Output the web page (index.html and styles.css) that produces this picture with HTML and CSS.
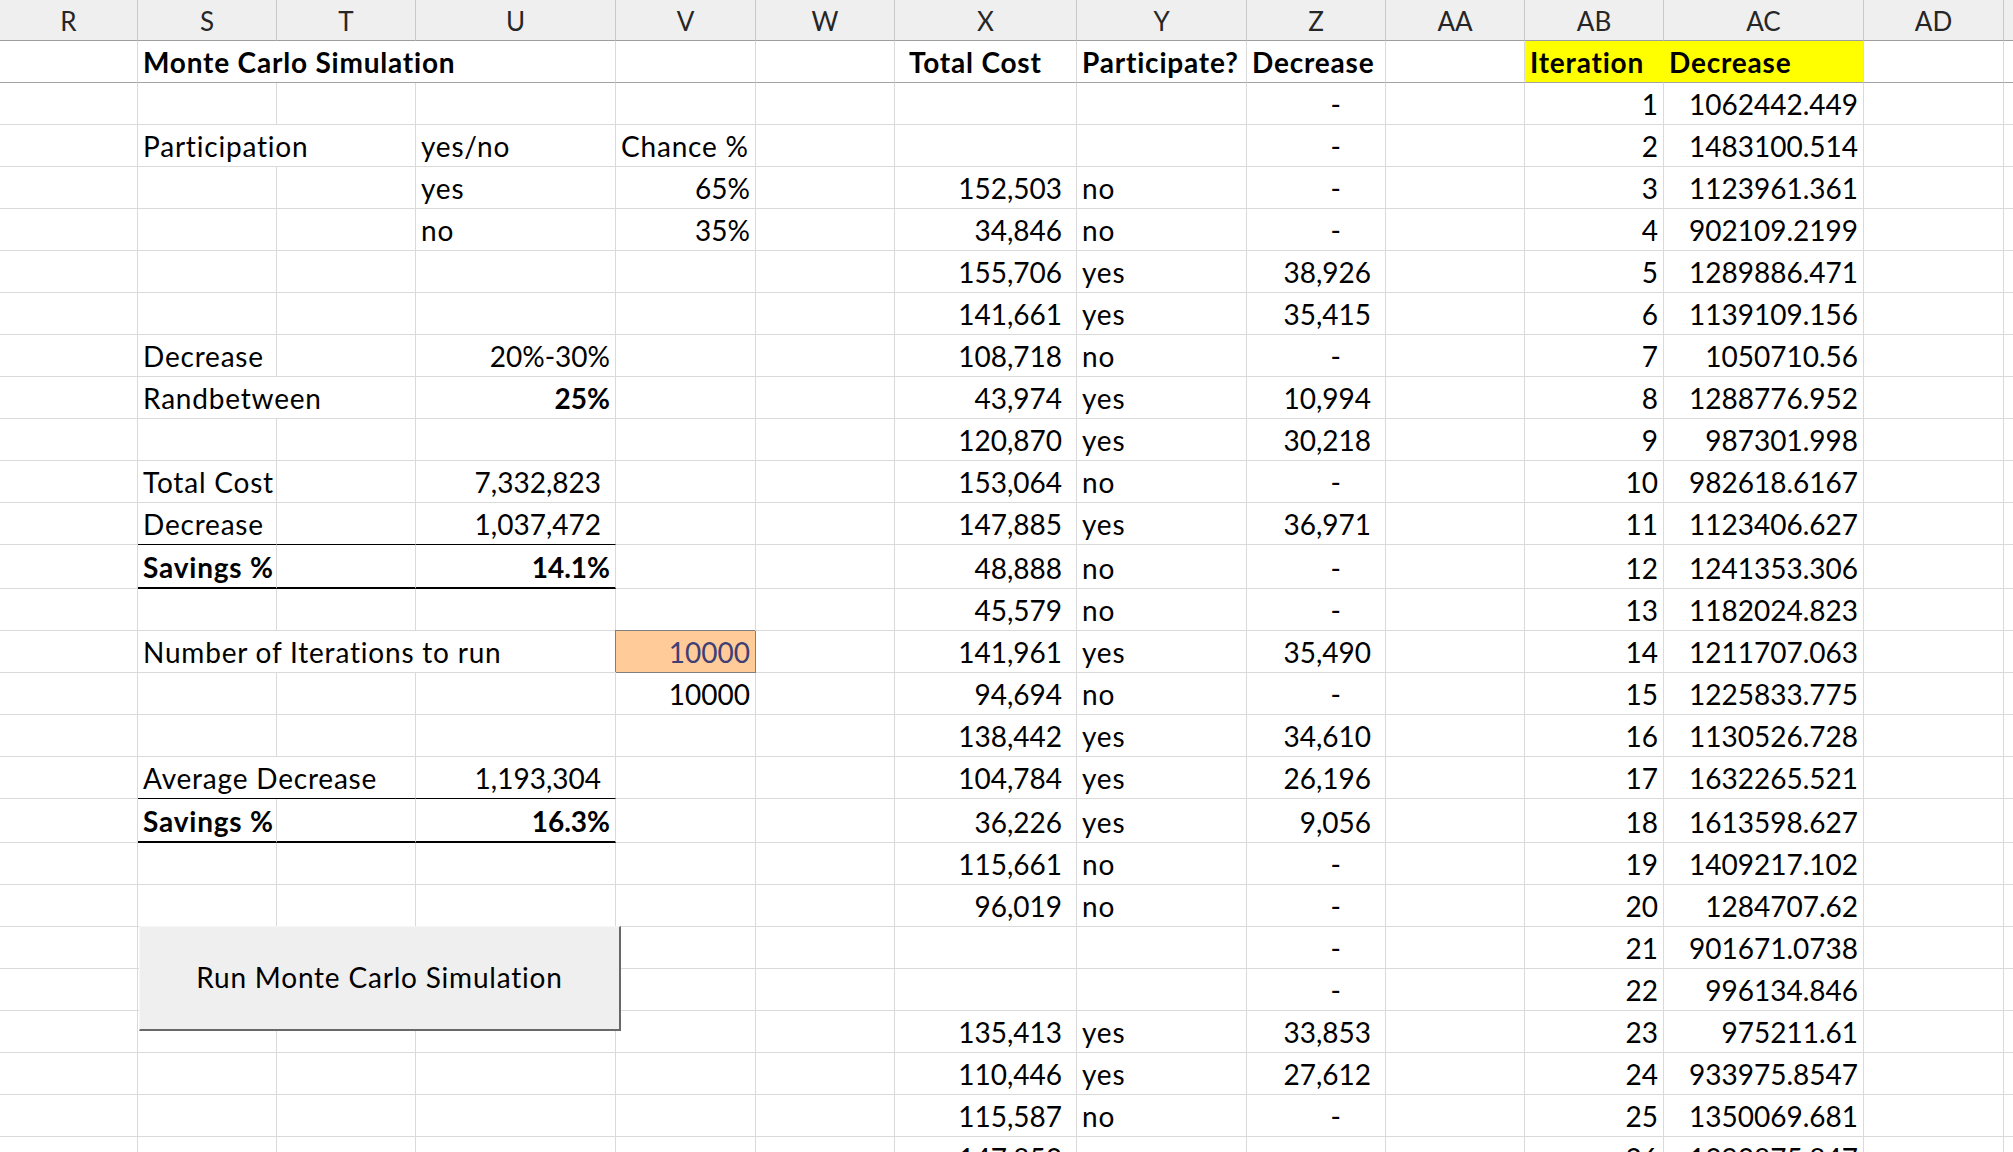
FILE: index.html
```html
<!DOCTYPE html>
<html>
<head>
<meta charset="utf-8">
<title>Monte Carlo Simulation</title>
<link rel="stylesheet" href="styles.css">
</head>
<body>
<div class="sheet">
  <div class="h">R</div><div class="h">S</div><div class="h">T</div><div class="h">U</div><div class="h">V</div><div class="h">W</div><div class="h">X</div><div class="h">Y</div><div class="h">Z</div><div class="h">AA</div><div class="h">AB</div><div class="h">AC</div><div class="h">AD</div><div class="h"></div>

  <div class="t"></div><div class="t b s3">Monte Carlo Simulation</div><div class="t"></div><div class="t"></div><div class="t b pl">Total Cost</div><div class="t b">Participate?</div><div class="t b">Decrease</div><div class="t"></div><div class="t b yel nb">Iteration</div><div class="t b yel">Decrease</div><div class="t"></div><div class="t"></div>

  <div></div><div></div><div></div><div></div><div></div><div></div><div></div><div></div><div class="d">-</div><div></div><div class="r">1</div><div class="r">1062442.449</div><div></div><div></div>

  <div></div><div class="s2">Participation</div><div>yes/no</div><div>Chance %</div><div></div><div></div><div></div><div class="d">-</div><div></div><div class="r">2</div><div class="r">1483100.514</div><div></div><div></div>

  <div></div><div></div><div></div><div>yes</div><div class="r">65%</div><div></div><div class="a">152,503</div><div>no</div><div class="d">-</div><div></div><div class="r">3</div><div class="r">1123961.361</div><div></div><div></div>

  <div></div><div></div><div></div><div>no</div><div class="r">35%</div><div></div><div class="a">34,846</div><div>no</div><div class="d">-</div><div></div><div class="r">4</div><div class="r">902109.2199</div><div></div><div></div>

  <div></div><div></div><div></div><div></div><div></div><div></div><div class="a">155,706</div><div>yes</div><div class="a">38,926</div><div></div><div class="r">5</div><div class="r">1289886.471</div><div></div><div></div>

  <div></div><div></div><div></div><div></div><div></div><div></div><div class="a">141,661</div><div>yes</div><div class="a">35,415</div><div></div><div class="r">6</div><div class="r">1139109.156</div><div></div><div></div>

  <div></div><div>Decrease</div><div></div><div class="r">20%-30%</div><div></div><div></div><div class="a">108,718</div><div>no</div><div class="d">-</div><div></div><div class="r">7</div><div class="r">1050710.56</div><div></div><div></div>

  <div></div><div class="s2">Randbetween</div><div class="r b">25%</div><div></div><div></div><div class="a">43,974</div><div>yes</div><div class="a">10,994</div><div></div><div class="r">8</div><div class="r">1288776.952</div><div></div><div></div>

  <div></div><div></div><div></div><div></div><div></div><div></div><div class="a">120,870</div><div>yes</div><div class="a">30,218</div><div></div><div class="r">9</div><div class="r">987301.998</div><div></div><div></div>

  <div></div><div>Total Cost</div><div></div><div class="a">7,332,823</div><div></div><div></div><div class="a">153,064</div><div>no</div><div class="d">-</div><div></div><div class="r">10</div><div class="r">982618.6167</div><div></div><div></div>

  <div></div><div class="u1">Decrease</div><div class="u1"></div><div class="a u1">1,037,472</div><div></div><div></div><div class="a">147,885</div><div>yes</div><div class="a">36,971</div><div></div><div class="r">11</div><div class="r">1123406.627</div><div></div><div></div>

  <div></div><div class="b u2">Savings %</div><div class="u2"></div><div class="r b u2">14.1%</div><div></div><div></div><div class="a">48,888</div><div>no</div><div class="d">-</div><div></div><div class="r">12</div><div class="r">1241353.306</div><div></div><div></div>

  <div></div><div></div><div></div><div></div><div></div><div></div><div class="a">45,579</div><div>no</div><div class="d">-</div><div></div><div class="r">13</div><div class="r">1182024.823</div><div></div><div></div>

  <div></div><div class="s3">Number of Iterations to run</div><div class="r input">10000</div><div></div><div class="a">141,961</div><div>yes</div><div class="a">35,490</div><div></div><div class="r">14</div><div class="r">1211707.063</div><div></div><div></div>

  <div></div><div></div><div></div><div></div><div class="r">10000</div><div></div><div class="a">94,694</div><div>no</div><div class="d">-</div><div></div><div class="r">15</div><div class="r">1225833.775</div><div></div><div></div>

  <div></div><div></div><div></div><div></div><div></div><div></div><div class="a">138,442</div><div>yes</div><div class="a">34,610</div><div></div><div class="r">16</div><div class="r">1130526.728</div><div></div><div></div>

  <div></div><div class="s2 u1">Average Decrease</div><div class="a u1">1,193,304</div><div></div><div></div><div class="a">104,784</div><div>yes</div><div class="a">26,196</div><div></div><div class="r">17</div><div class="r">1632265.521</div><div></div><div></div>

  <div></div><div class="b u2">Savings %</div><div class="u2"></div><div class="r b u2">16.3%</div><div></div><div></div><div class="a">36,226</div><div>yes</div><div class="a">9,056</div><div></div><div class="r">18</div><div class="r">1613598.627</div><div></div><div></div>

  <div></div><div></div><div></div><div></div><div></div><div></div><div class="a">115,661</div><div>no</div><div class="d">-</div><div></div><div class="r">19</div><div class="r">1409217.102</div><div></div><div></div>

  <div></div><div></div><div></div><div></div><div></div><div></div><div class="a">96,019</div><div>no</div><div class="d">-</div><div></div><div class="r">20</div><div class="r">1284707.62</div><div></div><div></div>

  <div></div><div></div><div></div><div></div><div></div><div></div><div></div><div></div><div class="d">-</div><div></div><div class="r">21</div><div class="r">901671.0738</div><div></div><div></div>

  <div></div><div></div><div></div><div></div><div></div><div></div><div></div><div></div><div class="d">-</div><div></div><div class="r">22</div><div class="r">996134.846</div><div></div><div></div>

  <div></div><div></div><div></div><div></div><div></div><div></div><div class="a">135,413</div><div>yes</div><div class="a">33,853</div><div></div><div class="r">23</div><div class="r">975211.61</div><div></div><div></div>

  <div></div><div></div><div></div><div></div><div></div><div></div><div class="a">110,446</div><div>yes</div><div class="a">27,612</div><div></div><div class="r">24</div><div class="r">933975.8547</div><div></div><div></div>

  <div></div><div></div><div></div><div></div><div></div><div></div><div class="a">115,587</div><div>no</div><div class="d">-</div><div></div><div class="r">25</div><div class="r">1350069.681</div><div></div><div></div>

  <div></div><div></div><div></div><div></div><div></div><div></div><div class="a">147,853</div><div>no</div><div class="d">-</div><div></div><div class="r">26</div><div class="r">1393875.847</div><div></div><div></div>

  <button class="run" type="button">Run Monte Carlo Simulation</button>
</div>
</body>
</html>
```

FILE: styles.css
```css
* { box-sizing: border-box; }
html, body { margin: 0; padding: 0; background: #fff; }
body {
  width: 2013px;
  height: 1152px;
  overflow: hidden;
  font-family: Lato, "Liberation Sans", sans-serif;
  font-size: 28px;
  color: #000;
}
.sheet {
  position: relative;
  display: grid;
  grid-template-columns: 138px 139px 139px 200px 140px 139px 182px 170px 139px 139px 139px 200px 140px 1fr;
  grid-template-rows: 41px repeat(12, 42px) 44px repeat(5, 42px) 44px repeat(8, 42px);
}
.sheet > div {
  border-right: 1px solid #dadada;
  border-bottom: 1px solid #dadada;
  display: flex;
  align-items: flex-end;
  padding: 0 5px 4px;
  line-height: 31px;
  white-space: nowrap;
  letter-spacing: 0.8px;
}
.sheet .h {
  background: #efefef;
  border-right-color: #c9c9c9;
  border-bottom-color: #9e9e9e;
  justify-content: center;
  align-items: center;
  color: #262626;
  font-size: 26px;
  letter-spacing: 0;
  line-height: 40px;
  padding: 1px 0 0;
}
.sheet .t { border-bottom-color: #a3a3a3; }
.sheet .b { font-weight: 700; }
.sheet .s2 { grid-column: span 2; }
.sheet .s3 { grid-column: span 3; }
.sheet .pl { padding-left: 14px; }
.sheet .yel { background: #ffff00; }
.sheet .nb { border-right-color: #ffff00; }
.sheet .r { justify-content: flex-end; letter-spacing: 0; }
.sheet .a { justify-content: flex-end; padding-right: 14px; letter-spacing: 0; }
.sheet .d { justify-content: flex-end; padding-right: 44px; letter-spacing: 0; }
.sheet .u1 { border-bottom: 1px solid #000; }
.sheet .u2 { border-bottom: 2px solid #000; }
.sheet .input {
  background: #ffcc99;
  color: #3f3f76;
  border-right-color: #7f7f7f;
  border-bottom-color: #7f7f7f;
  box-shadow: -1px -1px 0 0 #7f7f7f;
}
.run {
  position: absolute;
  left: 139px;
  top: 926px;
  width: 482px;
  height: 105px;
  margin: 0;
  padding: 0 0 2px;
  background: #efefef;
  border: 0;
  border-top: 1px solid #f6f6f6;
  border-left: 1px solid #f6f6f6;
  border-right: 2px solid #686868;
  border-bottom: 2px solid #686868;
  font-family: Lato, "Liberation Sans", sans-serif;
  font-size: 28px;
  letter-spacing: 0.8px;
  color: #000;
  text-align: center;
}
```
